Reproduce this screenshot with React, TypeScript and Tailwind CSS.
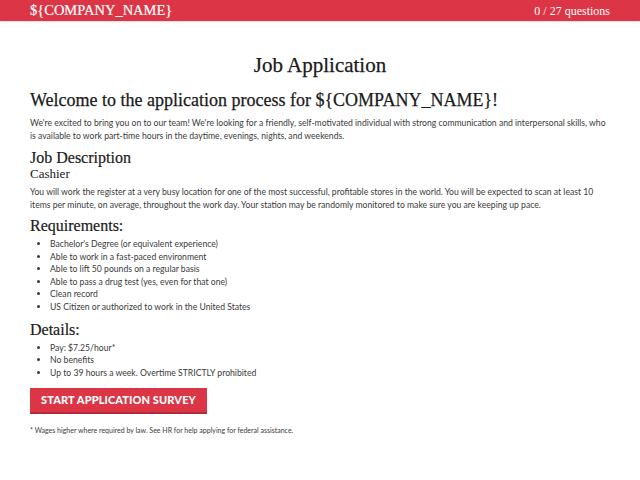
import React from "react";

const serif = { fontFamily: '"Liberation Serif", "Times New Roman", serif' };

export default function App() {
  const sans = "font-['Lato','Noto_Sans',sans-serif]";
  return (
    <div className="w-[640px] h-[480px] bg-white overflow-hidden">
      <div className="h-[21px] bg-[#dc3545] flex items-center justify-between px-[30px] text-white shadow-[0_1px_2px_rgba(0,0,0,0.15)]">
        <span style={serif} className="text-[14.5px] leading-none [-webkit-text-stroke:0.2px_white]">${"{COMPANY_NAME}"}</span>
        <span style={serif} className="text-[12px] leading-none">0 / 27 questions</span>
      </div>
      <div className="px-[30px] text-[#1a1a1a]">
        <h1 style={serif} className="text-center text-[21px] leading-[24px] mt-[32px] [-webkit-text-stroke:0.25px_#1a1a1a]">Job Application</h1>
        <h2 style={serif} className="text-[18px] leading-[22px] mt-[12px] [-webkit-text-stroke:0.25px_#1a1a1a]">Welcome to the application process for ${"{COMPANY_NAME}"}!</h2>
        <p className={`${sans} text-[8.65px] leading-[13px] mt-[5px] text-[#3a3a3a]`}>
          We're excited to bring you on to our team! We're looking for a friendly, self-motivated individual with strong communication and interpersonal skills, who is available to work part-time hours in the daytime, evenings, nights, and weekends.
        </p>
        <h3 style={serif} className="text-[16px] leading-[16px] mt-[8px] [-webkit-text-stroke:0.2px_#1a1a1a]">Job Description</h3>
        <div style={serif} className="text-[13px] leading-[15px]">Cashier</div>
        <p className={`${sans} text-[8.65px] leading-[13px] mt-[4px] text-[#3a3a3a]`}>
          You will work the register at a very busy location for one of the most successful, profitable stores in the world. You will be expected to scan at least 10 items per minute, on average, throughout the work day. Your station may be randomly monitored to make sure you are keeping up pace.
        </p>
        <h3 style={serif} className="text-[16px] leading-[20px] mt-[5px] [-webkit-text-stroke:0.2px_#1a1a1a]">Requirements:</h3>
        <ul className={`${sans} list-disc pl-[20px] text-[8.65px] leading-[12.6px] mt-[2px] text-[#3a3a3a]`}>
          <li>Bachelor's Degree (or equivalent experience)</li>
          <li>Able to work in a fast-paced environment</li>
          <li>Able to lift 50 pounds on a regular basis</li>
          <li>Able to pass a drug test (yes, even for that one)</li>
          <li>Clean record</li>
          <li>US Citizen or authorized to work in the United States</li>
        </ul>
        <h3 style={serif} className="text-[16px] leading-[20px] mt-[6px] [-webkit-text-stroke:0.2px_#1a1a1a]">Details:</h3>
        <ul className={`${sans} list-disc pl-[20px] text-[8.65px] leading-[12.6px] mt-[2px] text-[#3a3a3a]`}>
          <li>Pay: $7.25/hour*</li>
          <li>No benefits</li>
          <li>Up to 39 hours a week. Overtime STRICTLY prohibited</li>
        </ul>
        <button className={`${sans} block mt-[9px] w-[177px] h-[26px] bg-[#dc3545] text-white text-[11px] font-black tracking-[0.1px] border-b-2 border-[#b52a38]`}>
          START APPLICATION SURVEY
        </button>
        <p className={`${sans} text-[7px] leading-[10px] mt-[11px] text-[#3a3a3a]`}>
          * Wages higher where required by law. See HR for help applying for federal assistance.
        </p>
      </div>
    </div>
  );
}
